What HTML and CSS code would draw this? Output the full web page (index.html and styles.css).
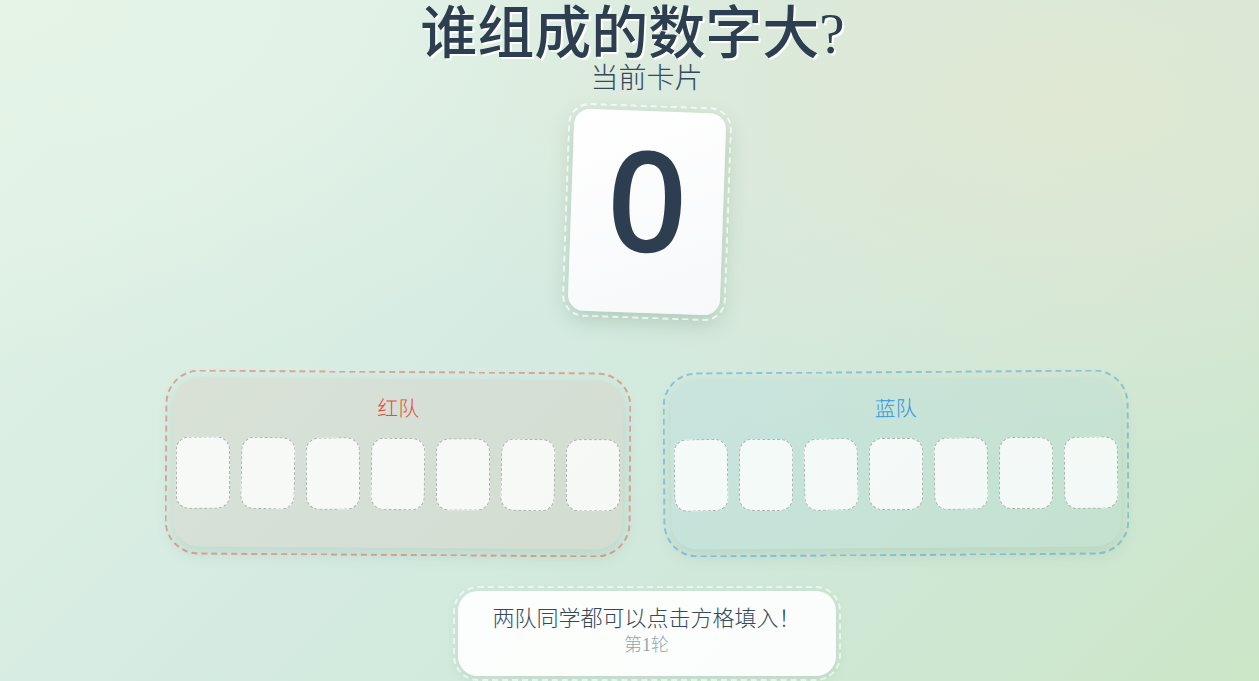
FILE: index.html
```html
<!DOCTYPE html>
<html lang="zh">
<head>
<meta charset="utf-8">
<title>谁组成的数字大？</title>
<link rel="stylesheet" href="styles.css">
</head>
<body>
<main class="page">
  <h1 class="title">谁组成的数字大?</h1>
  <div class="subtitle">当前卡片</div>
  <div class="card"><span class="digit">0</span></div>
  <section class="teams">
    <div class="team team-red">
      <div class="team-name">红队</div>
      <div class="slots">
        <div class="slot"></div><div class="slot"></div><div class="slot"></div><div class="slot"></div><div class="slot"></div><div class="slot"></div><div class="slot"></div>
      </div>
    </div>
    <div class="team team-blue">
      <div class="team-name">蓝队</div>
      <div class="slots">
        <div class="slot"></div><div class="slot"></div><div class="slot"></div><div class="slot"></div><div class="slot"></div><div class="slot"></div><div class="slot"></div>
      </div>
    </div>
  </section>
  <div class="status">
    <div class="status-msg">两队同学都可以点击方格填入！</div>
    <div class="status-round">第1轮</div>
  </div>
</main>
</body>
</html>
```
FILE: styles.css
```css
html, body {
  margin: 0;
  padding: 0;
  height: 100%;
  overflow: hidden;
}
body {
  font-family: "Liberation Serif", "Noto Sans CJK SC", serif;
  color: #2c3e50;
  background:
    radial-gradient(ellipse at 85% 15%, rgba(226, 232, 210, 0.9) 0%, rgba(226, 232, 210, 0) 45%),
    radial-gradient(ellipse at 0% 0%, rgba(230, 244, 232, 1) 0%, rgba(230, 244, 232, 0) 40%),
    linear-gradient(135deg, #e2f2e5 0%, #d5ebe2 45%, #d0e8da 65%, #cce6c8 100%);
}
.page {
  box-sizing: border-box;
  padding-left: 34px;
  display: flex;
  flex-direction: column;
  align-items: center;
  height: 681px;
}
.title {
  margin: 2px 28px 0 0;
  font-size: 57px;
  line-height: 64px;
  font-weight: 500;
  color: #2c3e50;
  text-shadow: 2px 2px 0 #ffffff;
}
.subtitle {
  font-size: 28px;
  line-height: 26px;
  font-weight: 300;
  color: #34495e;
}
.card {
  margin-top: 19px;
  width: 152px;
  height: 202px;
  background: linear-gradient(160deg, #ffffff 0%, #f7f8fa 100%);
  border-radius: 16px;
  outline: 2px dashed rgba(255, 255, 255, 0.7);
  outline-offset: 4px;
  box-shadow: 0 8px 22px rgba(60, 110, 80, 0.25);
  transform: rotate(2deg);
  display: flex;
  align-items: center;
  justify-content: center;
}
.digit {
  font-family: "Open Sans", "Liberation Sans", sans-serif;
  font-weight: 600;
  font-size: 140px;
  line-height: 1;
  color: #2c3e50;
  transform: translate(0, -14px);
}
.teams {
  margin-top: 66px;
  display: flex;
  gap: 48px;
}
.team {
  width: 450px;
  padding: 18px 0 38px;
  border-radius: 26px;
  outline-offset: 6px;
  box-shadow: 0 6px 16px rgba(80, 130, 100, 0.18);
  display: flex;
  flex-direction: column;
  align-items: center;
}
.team-red {
  background: rgba(231, 76, 60, 0.07);
  outline: 2px dashed rgba(231, 76, 60, 0.45);
  transform: rotate(0.4deg);
}
.team-blue {
  background: rgba(52, 152, 219, 0.06);
  outline: 2px dashed rgba(52, 152, 219, 0.45);
  transform: rotate(-0.4deg);
}
.team-name {
  font-size: 21px;
  line-height: 24px;
  font-weight: 300;
}
.team-red .team-name { color: #e74c3c; }
.team-blue .team-name { color: #3498db; }
.slots {
  margin-top: 17px;
  display: flex;
  gap: 11px;
}
.slot {
  width: 52px;
  height: 70px;
  border: 1px dashed #aab3b0;
  border-radius: 13px;
  background: rgba(255, 255, 255, 0.8);
}
.slot:nth-child(1) { transform: rotate(-0.6deg); }
.slot:nth-child(2) { transform: rotate(0.8deg); }
.slot:nth-child(3) { transform: rotate(-0.8deg); }
.slot:nth-child(4) { transform: rotate(0.5deg); }
.slot:nth-child(5) { transform: rotate(-0.5deg); }
.slot:nth-child(6) { transform: rotate(0.7deg); }
.slot:nth-child(7) { transform: rotate(-0.4deg); }
.status {
  margin-top: 43px;
  width: 378px;
  height: 85px;
  box-sizing: border-box;
  padding-top: 14px;
  border-radius: 20px;
  background: rgba(255, 255, 255, 0.92);
  outline: 2px dashed rgba(255, 255, 255, 0.6);
  outline-offset: 3px;
  box-shadow: 0 4px 12px rgba(80, 130, 100, 0.15);
  text-align: center;
}
.status-msg {
  font-size: 22px;
  line-height: 28px;
  font-weight: 300;
  color: #34495e;
}
.status-round {
  font-size: 18px;
  line-height: 24px;
  font-weight: 300;
  color: #95a5a6;
}
```
